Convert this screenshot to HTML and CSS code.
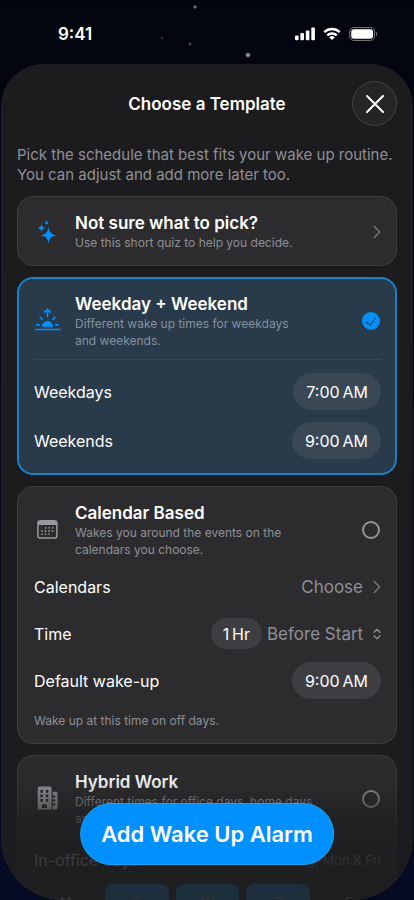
FILE: index.html
```html
<!DOCTYPE html>
<html lang="en">
<head>
<meta charset="utf-8">
<meta name="viewport" content="width=device-width, initial-scale=1">
<title>Choose a Template</title>
<link rel="stylesheet" href="styles.css">
</head>
<body>
<div class="screen">
  <header class="status">
    <span class="clock">9:41</span>
    <span class="indicators">
      <svg width="20" height="14" viewBox="0 0 20 14" fill="#fff" aria-hidden="true"><rect x="0" y="8.500" width="3.600" height="4.800" rx="1"/><rect x="5.400" y="6" width="3.600" height="7.300" rx="1"/><rect x="10.800" y="3.400" width="3.600" height="9.900" rx="1"/><rect x="16.300" y=".5" width="3.600" height="12.800" rx="1"/></svg>
      <svg width="18" height="14" viewBox="0 0 18 14" aria-hidden="true"><g fill="none" stroke="#fff" stroke-width="2.400"><path d="M1.300 5.100a11 11 0 0 1 15.400 0"/><path d="M4.200 8.400a6.900 6.900 0 0 1 9.600 0"/></g><path d="M9 13.100 6.200 10.400a4 4 0 0 1 5.600 0z" fill="#fff"/></svg>
      <svg width="29" height="14" viewBox="0 0 29 14" aria-hidden="true"><rect x=".6" y=".6" width="25" height="12.800" rx="4.200" fill="none" stroke="#7d7e85"/><rect x="2.200" y="2.200" width="21.800" height="9.600" rx="2.800" fill="#fff"/><path d="M27 4.800c1.300.5 1.300 3.900 0 4.400z" fill="#7d7e85"/></svg>
    </span>
  </header>

  <main class="sheet">
    <div class="titlebar">
      <h1>Choose a Template</h1>
      <button class="close" type="button" aria-label="Close">
        <svg width="20" height="20" viewBox="0 0 20 20" fill="none" stroke="#fff" stroke-width="2.100" stroke-linecap="round"><path d="m2 2 16 16M18 2 2 18"/></svg>
      </button>
    </div>
    <p class="intro">Pick the schedule that best fits your wake up routine. You can adjust and add more later too.</p>

    <div class="cards">
      <a class="card head quiz" href="#quiz">
        <svg class="icon" viewBox="0 0 28 28" fill="#0091ff" aria-hidden="true"><path d="M14.500 9c.9 5.600 2.700 7.300 8 8.300-5.300 1-7.100 2.700-8 8.300-.9-5.600-2.700-7.300-8-8.300 5.300-1 7.100-2.700 8-8.300zM7.500 6c.5 2.700 1.400 3.500 4 4-2.600.5-3.500 1.300-4 4-.5-2.700-1.400-3.500-4-4 2.600-.5 3.500-1.300 4-4zM12.600 2.300c.3 1.700.9 2.300 2.500 2.600-1.600.3-2.200.9-2.500 2.600-.3-1.700-.9-2.300-2.500-2.600 1.600-.3 2.200-.9 2.500-2.600z"/></svg>
        <span class="copy"><span class="name">Not sure what to pick?</span><span class="desc">Use this short quiz to help you decide.</span></span>
        <svg class="chevron" viewBox="0 0 8 14" aria-hidden="true"><path d="m1.200 1.500 5.500 5.500-5.500 5.500"/></svg>
      </a>

      <section class="card selected">
        <label class="head">
          <svg class="icon" viewBox="0 0 28 28" fill="none" stroke="#0091ff" stroke-width="1.700" stroke-linecap="round" stroke-linejoin="round" aria-hidden="true"><path d="M1.800 22.500h24M13.500 9.200V2.600M10.700 5.200l2.800-2.800 2.800 2.800M2.600 17.800h2.800M21.600 17.800h2.800M6.200 10.400l1.900 1.900M20.800 10.400 18.900 12.300"/><path d="M8.400 19.500a5.200 5.200 0 0 1 10.400 0z" fill="#0091ff" stroke-width=".8"/></svg>
          <span class="copy"><span class="name">Weekday + Weekend</span><span class="desc">Different wake up times for weekdays<br>and weekends.</span></span>
          <input class="radio" type="radio" name="template" checked>
        </label>
        <hr>
        <div class="rows">
          <div class="row"><span>Weekdays</span><button class="pill" type="button">7:00&#8201;AM</button></div>
          <div class="row"><span>Weekends</span><button class="pill" type="button">9:00&#8201;AM</button></div>
        </div>
      </section>

      <section class="card">
        <label class="head">
          <svg class="icon" viewBox="0 0 28 28" aria-hidden="true"><rect x="3.900" y="4.800" width="19" height="17.200" rx="2.600" fill="none" stroke="#98989f" stroke-width="1.500"/><path d="M3.900 9.100V7.400a2.600 2.600 0 0 1 2.600-2.600h13.800a2.600 2.600 0 0 1 2.600 2.600v1.700z" fill="#98989f"/><path d="M11 11.900h9M7.300 15H20M7.300 18.100h9" fill="none" stroke="#b4b4ba" stroke-width="1.400" stroke-dasharray="1.400 2.100"/></svg>
          <span class="copy"><span class="name">Calendar Based</span><span class="desc">Wakes you around the events on the<br>calendars you choose.</span></span>
          <input class="radio" type="radio" name="template">
        </label>
        <div class="rows roomy">
          <div class="row"><span>Calendars</span>
            <button class="choose" type="button">Choose <svg class="chevron" viewBox="0 0 8 14" aria-hidden="true"><path d="m1.200 1.500 5.500 5.500-5.500 5.500"/></svg></button>
          </div>
          <div class="row short"><label for="when">Time</label>
            <span class="timing">
              <button class="pill" type="button">1&#8201;Hr</button>
              <select id="when"><option>Before Start</option><option>After Start</option></select>
              <svg class="updown" viewBox="0 0 8 12" aria-hidden="true"><path d="M1 4.200 4 1.200l3 3M1 7.800l3 3 3-3"/></svg>
            </span>
          </div>
          <div class="row"><span>Default wake-up</span><button class="pill" type="button">9:00&#8201;AM</button></div>
          <p class="note">Wake up at this time on off days.</p>
        </div>
      </section>

      <section class="card">
        <label class="head">
          <svg class="icon" viewBox="0 0 28 28" aria-hidden="true"><path d="M5.500 1.500h10.300a1.800 1.800 0 0 1 1.800 1.800v21.200H3.700V3.300a1.800 1.800 0 0 1 1.800-1.800zM18.800 6.700h2.900a1.800 1.800 0 0 1 1.800 1.800v14.200a1.800 1.800 0 0 1-1.800 1.800h-2.900z" fill="#98989f"/><g fill="#29292b"><path d="M6.400 5.100h2.500v2.700H6.400zM11.800 5.100h2.500v2.700h-2.500zM6.400 9.600h2.500v2.700H6.400zM11.800 9.600h2.500v2.700h-2.500zM6.400 14.100h2.500v2.700H6.400zM11.800 14.100h2.500v2.700h-2.500zM8 19.500h5v3.400H8zM18.800 10.600h2.500v2h-2.500zM18.800 14.400h2.500v2h-2.500zM18.800 18.200h2.500v2h-2.500z"/></g></svg>
          <span class="copy"><span class="name">Hybrid Work</span><span class="desc">Different times for office days, home days,<br>and days off.</span></span>
          <input class="radio" type="radio" name="template">
        </label>
        <hr>
        <div class="rows tight">
          <div class="row office"><span>In-office days</span><span class="range">e.g. Mon &amp; Fri</span></div>
          <div class="days">
            <button type="button">M</button><button class="on" type="button">T</button><button class="on" type="button">W</button><button class="on" type="button">T</button><button type="button">F</button>
          </div>
        </div>
      </section>
    </div>
    <div class="fade"></div>
  </main>
  <button class="cta" type="button">Add Wake Up Alarm</button>
</div>
</body>
</html>
```
FILE: styles.css
```css
* { box-sizing: border-box; }

body {
  margin: 0;
  background: #02040e;
  color: #fff;
  font-family: Inter, "Liberation Sans", sans-serif;
  font-size: 17px;
}

h1, p { margin: 0; }

button, select {
  margin: 0;
  padding: 0;
  border: 0;
  background: none;
  color: inherit;
  font: inherit;
}

.screen {
  position: relative;
  display: flex;
  flex-direction: column;
  height: 100vh;
  padding: 0 1px;
  overflow: hidden;
  background:
    radial-gradient(circle at 195px 7px, #72747b 1px, transparent 2px),
    radial-gradient(circle at 190px 44px, #65676e 0, transparent 2px),
    radial-gradient(circle at 162px 38px, #33353d 0, transparent 2px),
    radial-gradient(circle at 248px 55px, #96989f 1px, transparent 3px),
    linear-gradient(#02040e, #050818 50%, #060b24);
}

.status {
  flex: none;
  display: flex;
  justify-content: space-between;
  align-items: center;
  height: 64px;
  padding: 4px 35px 0 57px;
}

.clock { font-size: 17px; font-weight: 600; }
.indicators { display: flex; gap: 8px; }

.sheet {
  position: relative;
  flex: 1;
  min-height: 0;
  overflow: hidden;
  padding: 16px 16px 0;
  border-radius: 42px 42px 62px 62px;
  background: #1c1c1e;
}

.titlebar {
  display: grid;
  grid-template-columns: 45px 1fr 45px;
  align-items: center;
  height: 47px;
}

h1 {
  grid-column: 2;
  text-align: center;
  font-size: 17px;
  font-weight: 600;
}

.close {
  display: grid;
  place-items: center;
  width: 45px;
  height: 45px;
  border: 1px solid #444447;
  border-radius: 50%;
  background: #252527;
}

.intro {
  margin: 18px 0 11px;
  color: #8f8f96;
  font-size: 15px;
  line-height: 20px;
}

.cards { display: flex; flex-direction: column; gap: 11px; }

.card {
  display: block;
  padding: 15px 15px 14px 16px;
  border: 1px solid #3e3e40;
  border-radius: 16px;
  background: #2c2c2e;
}

.selected {
  padding: 14px 14px 14px 15px;
  border: 2px solid #1b7fcb;
  background: #293a4a;
}

.head {
  display: flex;
  align-items: center;
  color: inherit;
  text-decoration: none;
}

.icon { flex: none; width: 28px; height: 28px; margin-right: 13px; }
.copy { flex: 1; display: flex; flex-direction: column; white-space: nowrap; }
.name { font-size: 17px; font-weight: 600; line-height: 22px; }
.desc { color: #8f8f96; font-size: 12px; line-height: 17px; }
.selected .desc { color: #8492a0; }

.chevron {
  flex: none;
  width: 8px;
  height: 14px;
  fill: none;
  stroke: #747479;
  stroke-width: 1.5;
  stroke-linecap: round;
  stroke-linejoin: round;
}

.radio {
  flex: none;
  appearance: none;
  width: 18px;
  height: 18px;
  margin: 0 1px 0 0;
  border: 2px solid #929298;
  border-radius: 50%;
}

.radio:checked {
  display: grid;
  place-items: center;
  border: 0;
  background: #0091ff;
}

.radio:checked::after {
  content: "";
  width: 5px;
  height: 9px;
  margin-bottom: 2px;
  border: solid #293a4a;
  border-width: 0 1px 1px 0;
  transform: rotate(35deg);
}

hr {
  height: 1px;
  margin: 10px 0 0;
  border: 0;
  background: #38383a;
}

.selected hr { background: #3a4753; }

.rows { display: flex; flex-direction: column; gap: 12px; margin-top: 13px; }
.roomy { gap: 13px; margin-top: 10px; }
.tight { margin-top: 10px; }

.row {
  display: flex;
  justify-content: space-between;
  align-items: center;
  height: 37px;
  font-size: 16px;
}

.row.short { height: 31px; }

.pill {
  height: 100%;
  padding: 0 13px;
  border-radius: 19px;
  background: #3d3d42;
}

.selected .pill { background: #3a4856; }
.timing { display: flex; align-items: center; height: 100%; }
.timing .pill { padding: 0 12px; }
.choose { display: flex; align-items: center; gap: 10px; color: #8f8f96; font-size: 17px; }

select {
  appearance: none;
  margin: 0 9px 0 5px;
  color: #8f8f96;
  font-size: 17px;
}

.updown {
  width: 8px;
  height: 12px;
  fill: none;
  stroke: #8f8f96;
  stroke-width: 1.3;
  stroke-linecap: round;
  stroke-linejoin: round;
}

.note { color: #8f8f96; font-size: 12px; line-height: 17px; }

.row.office { height: 24px; color: #c8c8cc; font-size: 16px; }
.range { color: #8f8f96; font-size: 13px; }
.days { display: grid; grid-template-columns: repeat(5, 1fr); gap: 7px; }
.days button { height: 36px; border-radius: 8px; color: #b0a48c; font-size: 13px; }
.days .on { background: #2481c4; }

.fade {
  position: absolute;
  inset: auto 0 0;
  height: 150px;
  background: linear-gradient(rgba(28, 28, 30, 0), rgba(28, 28, 30, .08) 21%, rgba(28, 28, 30, .4) 35%, rgba(28, 28, 30, .65) 46%, rgba(28, 28, 30, .82) 70%, rgba(28, 28, 30, .82));
  pointer-events: none;
}

.cta {
  position: absolute;
  bottom: 35px;
  left: 50%;
  height: 62px;
  padding: 0 20px;
  transform: translateX(-50%);
  border: 1px solid #18a5f5;
  border-radius: 31px;
  background: #0091ff;
  font-size: 22px;
  font-weight: 600;
  white-space: nowrap;
}
```
